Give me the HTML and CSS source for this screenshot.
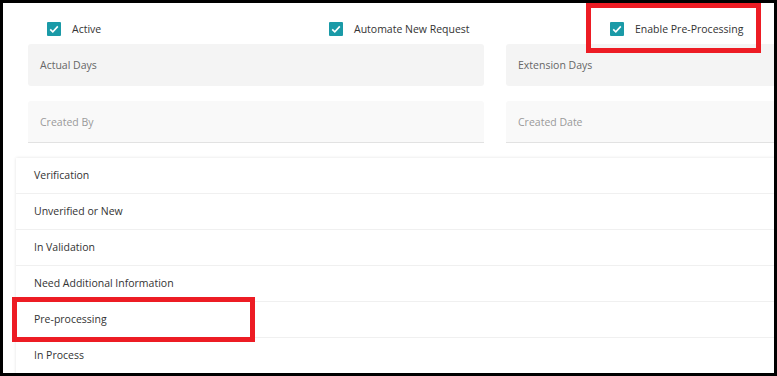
FILE: index.html
```html
<!DOCTYPE html>
<html lang="en">
<head>
    <meta charset="UTF-8">
    <title>Request Type Settings</title>
    <link rel="stylesheet" href="styles.css">
</head>
<body>
    <div class="frame">
        <!-- Options -->
        <div class="options">
            <label class="option">
                <span class="check"><svg viewBox="0 0 14 14" width="14" height="14"><path d="M3.2 7.3 L5.8 9.8 L10.8 4.4" fill="none" stroke="#fff" stroke-width="1.6"/></svg></span>
                Active
            </label>
            <label class="option">
                <span class="check"><svg viewBox="0 0 14 14" width="14" height="14"><path d="M3.2 7.3 L5.8 9.8 L10.8 4.4" fill="none" stroke="#fff" stroke-width="1.6"/></svg></span>
                Automate New Request
            </label>
            <label class="option">
                <span class="check"><svg viewBox="0 0 14 14" width="14" height="14"><path d="M3.2 7.3 L5.8 9.8 L10.8 4.4" fill="none" stroke="#fff" stroke-width="1.6"/></svg></span>
                Enable Pre-Processing
            </label>
        </div>

        <!-- Fields -->
        <div class="fields">
            <div class="field">Actual Days</div>
            <div class="field">Extension Days</div>
            <div class="field readonly">Created By</div>
            <div class="field readonly">Created Date</div>
        </div>

        <!-- Status list -->
        <ul class="status-list">
            <li>Verification</li>
            <li>Unverified or New</li>
            <li>In Validation</li>
            <li>Need Additional Information</li>
            <li>Pre-processing</li>
            <li>In Process</li>
        </ul>

        <div class="mark mark-option"></div>
        <div class="mark mark-status"></div>
    </div>
</body>
</html>
```

FILE: styles.css
```css
body { margin: 0; font-family: "Open Sans", Arial, sans-serif; font-size: 10.5px; color: #333; }
.frame { position: relative; box-sizing: border-box; width: 777px; height: 376px; border: 3px solid #000; background: #fff; overflow: hidden; }
.options { display: grid; grid-template-columns: 282px 281px 200px; padding: 16px 0 5px 44px; }
.option { display: flex; align-items: center; gap: 11px; height: 20px; color: #333; }
.check { display: flex; width: 14px; height: 14px; background: #1a9aa7; border-radius: 1px; }
.fields { display: grid; grid-template-columns: 456px 456px; column-gap: 22px; row-gap: 15px; margin-left: 25px; }
.field { display: flex; align-items: center; height: 42px; box-sizing: border-box; padding-left: 12px; background: #f4f4f4; border-radius: 3px; color: #666; }
.field.readonly { background: #f9f9f9; color: #9a9a9a; border-bottom: 1px solid #e2e2e2; border-radius: 3px 3px 0 0; }
.status-list { list-style: none; margin: 15px 0 0 13px; padding: 0; width: 780px; box-shadow: 0 0 3px rgba(0,0,0,0.12); }
.status-list li { display: flex; align-items: center; height: 35px; box-sizing: border-box; padding: 0 0 1px 18px; height: 36px; border-bottom: 1px solid #f0f0f0; color: #333; }
.mark { position: absolute; border: 5px solid #ed1c24; }
.mark-option { left: 583px; top: 0; width: 165px; height: 40px; }
.mark-status { left: 9px; top: 294px; width: 233px; height: 35px; }
```
